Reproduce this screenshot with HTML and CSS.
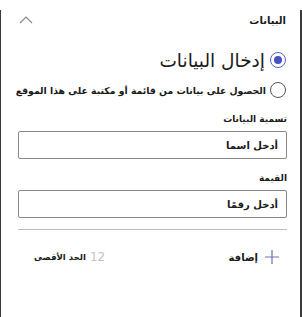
FILE: index.html
```html
<!DOCTYPE html>
<html lang="ar" dir="rtl">
<head>
<meta charset="utf-8">
<link rel="stylesheet" href="styles.css">
</head>
<body>
<div class="panel">
  <div class="header">
    <span class="title">البيانات</span>
    <svg class="chev" width="14" height="8" viewBox="0 0 14 8"><path d="M1 7 L7 1 L13 7" fill="none" stroke="#8a8a8a" stroke-width="1.2"/></svg>
  </div>
  <div class="radios">
    <label class="radio big"><span class="dot on"></span><span>إدخال البيانات</span></label>
    <label class="radio small"><span class="dot"></span><span>الحصول على بيانات من قائمة أو مكتبة على هذا الموقع</span></label>
  </div>
  <div class="field">
    <div class="lbl">تسمية البيانات</div>
    <div class="input">أدخل اسما</div>
  </div>
  <div class="field">
    <div class="lbl">القيمة</div>
    <div class="input">أدخل رقمًا</div>
  </div>
  <div class="divider"></div>
  <div class="addrow">
    <div class="add">
      <svg width="14" height="14" viewBox="0 0 14 14"><path d="M7 0 V14 M0 7 H14" stroke="#6b74b8" stroke-width="1.2"/></svg>
      <span>إضافة</span>
    </div>
    <div class="max"><span class="num">12</span><span>الحد الأقصى</span></div>
  </div>
</div>
</body>
</html>
```
FILE: styles.css
```css
html, body { margin: 0; padding: 0; background: #fff; }
body { font-family: "DejaVu Sans", sans-serif; color: #1a1a1a; }
.panel {
  width: 302px; height: 317px; box-sizing: border-box;
  border-left: 1px solid #3a3a3a; border-right: 2px solid #3a3a3a; border-bottom: 1px solid #3a3a3a;
  padding: 0 13px 0 17px;
}
.header { display: flex; justify-content: space-between; align-items: center; height: 20px; margin-top: 10px; }
.title { font-size: 10px; font-weight: bold; padding-right: 1px; }
.chev { margin-left: 1px; }
.radios { margin-top: 20px; display: flex; flex-direction: column; gap: 10px; }
.radio { display: flex; align-items: center; gap: 5px; }
.dot { width: 14px; height: 14px; border: 1px solid #555; border-radius: 50%; flex: none; margin-right: 1px; position: relative; }
.dot.on { border-color: #5563c1; }
.dot.on::after { content: ""; position: absolute; left: 3px; top: 3px; width: 8px; height: 8px; border-radius: 50%; background: #4453c0; }
.big { font-size: 18.5px; height: 20px; }
.small { font-size: 9.3px; font-weight: bold; height: 20px; white-space: nowrap; gap: 4px; }
.field { margin-top: 13px; }
.lbl { font-size: 9px; font-weight: bold; height: 12px; line-height: 12px; }
.input {
  margin-top: 6px; height: 28px; box-sizing: border-box; border: 1px solid #8a8a8a; border-radius: 2px;
  padding: 0 8px; display: flex; align-items: center; font-size: 10px; font-weight: bold;
}
.divider { margin-top: 11px; height: 1px; background: #bdbdbd; }
.addrow { display: flex; justify-content: space-between; align-items: center; margin-top: 19px; height: 16px; padding-left: 16px; }
.add { display: flex; align-items: center; gap: 7px; font-size: 10px; font-weight: bold; padding-right: 8px; }
.max { display: flex; align-items: center; gap: 4px; font-size: 8.5px; font-weight: bold; }
.num { color: #c4c4c4; font-size: 12px; font-weight: normal; }
```
